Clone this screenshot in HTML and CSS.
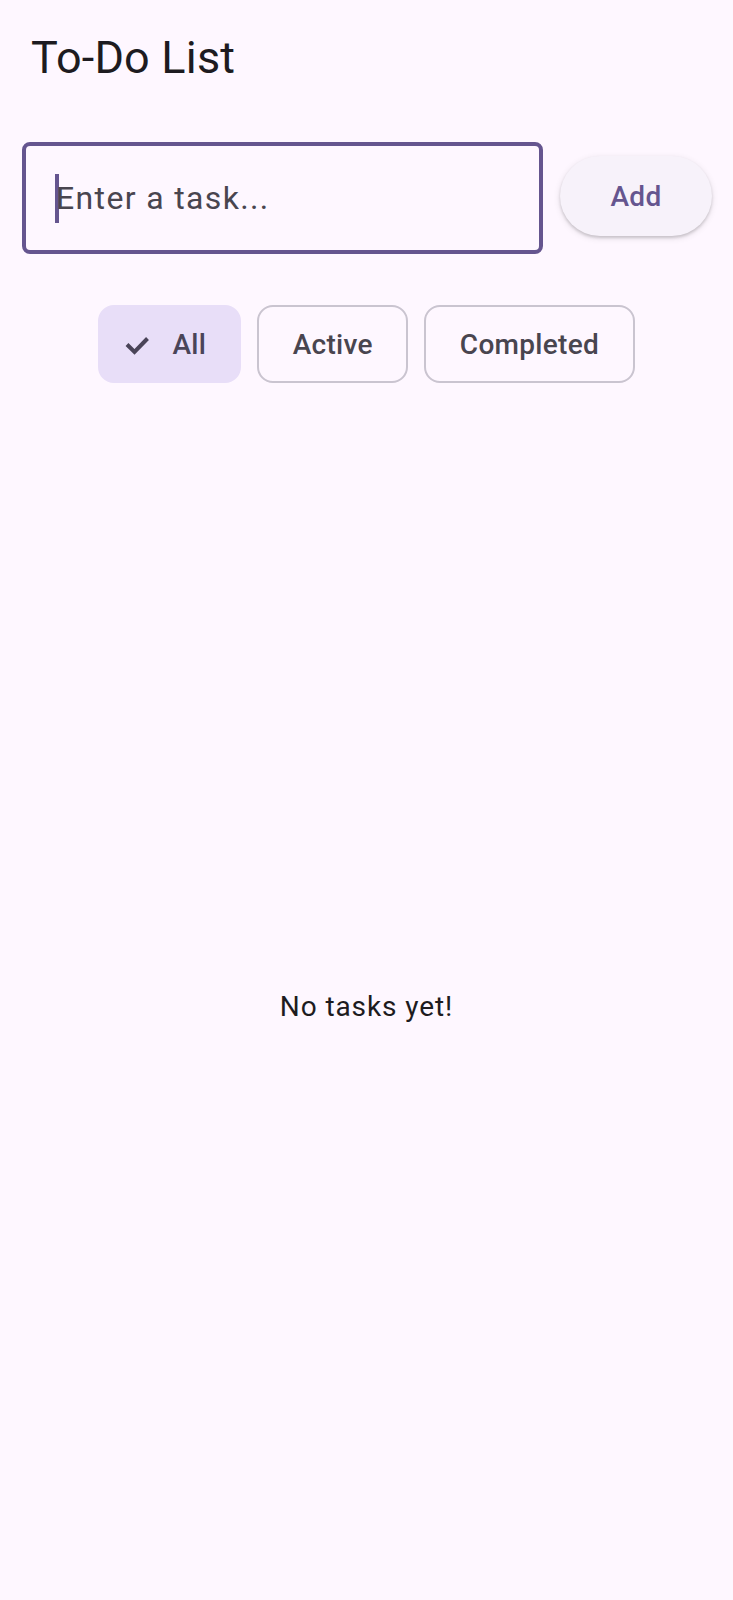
FILE: index.html
```html
<!DOCTYPE html>
<html lang="en">
<head>
<meta charset="utf-8">
<title>To-Do List</title>
<link rel="stylesheet" href="styles.css">
</head>
<body>
<div class="app">
  <header class="appbar">
    <h1 class="title">To-Do List</h1>
  </header>
  <div class="input-row">
    <div class="field">
      <span class="cursor"></span>
      <span class="hint">Enter a task...</span>
    </div>
    <button class="add-btn">Add</button>
  </div>
  <div class="chips">
    <div class="chip chip-selected">
      <svg class="check" viewBox="0 0 32 24" aria-hidden="true"><polyline points="7,12.5 14.5,20 27.5,6.5"/></svg>
      <span>All</span>
    </div>
    <div class="chip">Active</div>
    <div class="chip">Completed</div>
  </div>
  <main class="list">
    <p class="empty">No tasks yet!</p>
  </main>
</div>
</body>
</html>
```

FILE: styles.css
```css
* { box-sizing: border-box; }

html, body {
  margin: 0;
  padding: 0;
  background: #FEF7FF;
}

body {
  font-family: Roboto, "Noto Sans", "Liberation Sans", sans-serif;
  color: #1D1B20;
}

.app {
  min-height: 1600px;
  display: flex;
  flex-direction: column;
}

.appbar {
  height: 112px;
  padding: 32px 0 0 31px;
}

.title {
  margin: 0;
  font-size: 45px;
  font-weight: 400;
  line-height: 52px;
  letter-spacing: 0.2px;
  color: #1D1B20;
}

.input-row {
  display: flex;
  align-items: center;
  gap: 17px;
  padding: 30px 21px 0 22px;
}

.field {
  flex: 1;
  height: 112px;
  border: 4px solid #65558F;
  border-radius: 8px;
  display: flex;
  align-items: center;
  padding-left: 29px;
}

.cursor {
  width: 4px;
  height: 49px;
  background: #65558F;
  flex: none;
}

.hint {
  font-size: 32px;
  letter-spacing: 1.35px;
  color: #49454F;
  margin-left: -3px;
}

.add-btn {
  flex: none;
  width: 152px;
  height: 80px;
  border: none;
  border-radius: 40px;
  background: #F7F2FA;
  color: #65558F;
  font-family: inherit;
  font-size: 28px;
  font-weight: 500;
  letter-spacing: 0.3px;
  box-shadow: 0 2px 3px rgba(0, 0, 0, 0.16), 0 2px 6px 1px rgba(0, 0, 0, 0.08);
  margin-top: -4px;
}

.chips {
  display: flex;
  justify-content: center;
  gap: 16px;
  margin-top: 51px;
}

.chip {
  height: 78px;
  border: 2px solid #CAC4D0;
  border-radius: 16px;
  padding: 0 33.5px;
  display: flex;
  align-items: center;
  font-size: 28px;
  font-weight: 500;
  letter-spacing: 0.3px;
  color: #49454F;
}

.chip-selected {
  background: #E8DEF8;
  border-color: #E8DEF8;
  color: #4A4458;
  padding-left: 20px;
  padding-right: 33px;
  gap: 20px;
}

.check {
  width: 32px;
  height: 24px;
  fill: none;
  stroke: #4A4458;
  stroke-width: 4;
  stroke-linecap: butt;
  stroke-linejoin: miter;
  flex: none;
}

.list {
  flex: 1;
  display: flex;
  align-items: center;
  justify-content: center;
  margin-top: 30px;
}

.empty {
  margin: 0;
  font-size: 28px;
  letter-spacing: 0.9px;
  color: #1D1B20;
}
```
